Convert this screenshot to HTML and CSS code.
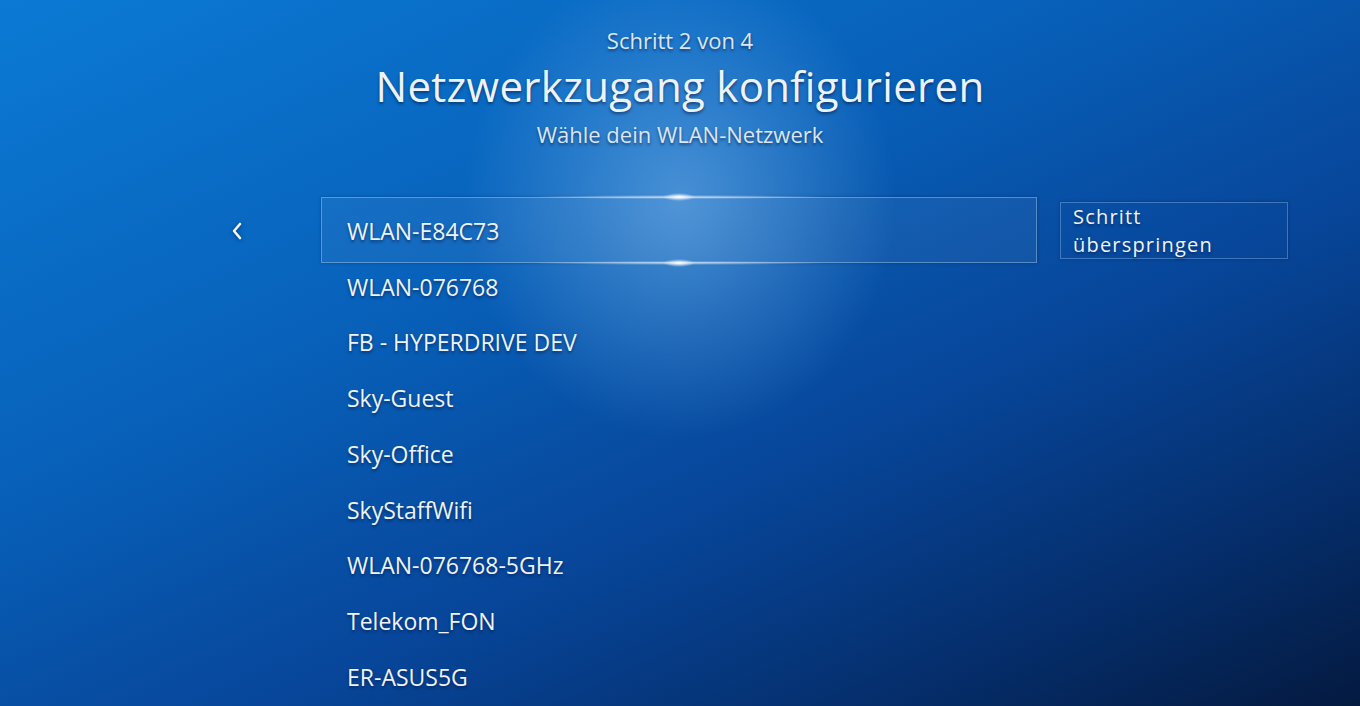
FILE: index.html
```html
<!DOCTYPE html>
<html lang="de">
<head>
<meta charset="utf-8">
<title>Netzwerkzugang konfigurieren</title>
<link rel="stylesheet" href="styles.css">
</head>
<body>
<div class="screen">
  <header class="header">
    <div class="step">Schritt 2 von 4</div>
    <h1 class="title">Netzwerkzugang konfigurieren</h1>
    <div class="subtitle">Wähle dein WLAN-Netzwerk</div>
  </header>
  <main class="main">
    <div class="back">
      <svg width="12" height="18" viewBox="0 0 12 18"><path d="M9 2 L3 9 L9 16" fill="none" stroke="#f2f6fc" stroke-width="2.6" stroke-linecap="round" stroke-linejoin="round"/></svg>
    </div>
    <ul class="list">
      <li class="item selected"><span>WLAN-E84C73</span></li>
      <li class="item"><span>WLAN-076768</span></li>
      <li class="item"><span>FB - HYPERDRIVE DEV</span></li>
      <li class="item"><span>Sky-Guest</span></li>
      <li class="item"><span>Sky-Office</span></li>
      <li class="item"><span>SkyStaffWifi</span></li>
      <li class="item"><span>WLAN-076768-5GHz</span></li>
      <li class="item"><span>Telekom_FON</span></li>
      <li class="item"><span>ER-ASUS5G</span></li>
    </ul>
    <div class="skip">Schritt<br>überspringen</div>
  </main>
</div>
</body>
</html>
```
FILE: styles.css
```css
html, body {
  margin: 0;
  padding: 0;
  width: 1360px;
  height: 706px;
  overflow: hidden;
}
body {
  font-family: "Open Sans", "Noto Sans", sans-serif;
  color: #eef3fb;
  background:
    radial-gradient(ellipse 300px 330px at 680px 200px, rgba(125,185,238,0.55), rgba(125,185,238,0) 72%),
    linear-gradient(155deg, #0b7ad4 0%, #0862bb 35%, #07469a 62%, #052f6e 82%, #041a40 100%);
}
.screen {
  width: 1360px;
  height: 706px;
  display: flex;
  flex-direction: column;
}
.header {
  display: flex;
  flex-direction: column;
  align-items: center;
  padding-top: 26px;
  text-shadow: 0 2px 3px rgba(0,20,60,0.55);
}
.step {
  font-size: 22px;
  line-height: 28px;
  color: #dbe5f3;
}
.title {
  margin: 0;
  font-size: 42px;
  font-weight: 400;
  line-height: 56px;
  margin-top: 4px;
  letter-spacing: 0.3px;
}
.subtitle {
  font-size: 22px;
  line-height: 28px;
  margin-top: 6px;
  color: #dbe5f3;
}
.main {
  display: flex;
  align-items: flex-start;
  margin-top: 55px;
}
.back {
  width: 321px;
  display: flex;
  justify-content: flex-end;
  padding-right: 78px;
  box-sizing: border-box;
  padding-top: 19px;
}
.back svg { display: block; filter: drop-shadow(0 1px 2px rgba(0,20,60,0.6)); }
.list {
  list-style: none;
  margin: 0;
  padding: 0;
  width: 716px;
}
.item {
  position: relative;
  height: 55.75px;
  display: flex;
  align-items: center;
  padding-left: 26px;
  font-size: 23px;
  text-shadow: 0 2px 3px rgba(0,20,60,0.55);
}
.item span { position: relative; }
.selected::before {
  content: "";
  position: absolute;
  left: 0;
  right: 0;
  top: -6px;
  bottom: -4px;
  border: 1px solid rgba(170,205,240,0.45);
  background: rgba(255,255,255,0.05);
  box-shadow: 0 0 3px rgba(0,20,60,0.35);
}
.selected::after {
  content: "";
  position: absolute;
  left: 0;
  right: 0;
  top: -10px;
  bottom: -8px;
  background:
    radial-gradient(ellipse 16px 4px at 358px 4px, rgba(255,255,255,1), rgba(255,255,255,0) 100%),
    radial-gradient(ellipse 150px 2px at 358px 4px, rgba(220,240,255,0.8), rgba(220,240,255,0) 100%),
    radial-gradient(ellipse 16px 4px at 358px calc(100% - 4px), rgba(255,255,255,1), rgba(255,255,255,0) 100%),
    radial-gradient(ellipse 150px 2px at 358px calc(100% - 4px), rgba(220,240,255,0.8), rgba(220,240,255,0) 100%);
  pointer-events: none;
}
.skip {
  margin-left: 23px;
  margin-top: -1px;
  width: 228px;
  box-sizing: border-box;
  border: 1px solid rgba(150,190,235,0.4);
  padding: 0 12px;
  font-size: 20px;
  letter-spacing: 1.2px;
  line-height: 27.5px;
  text-shadow: 0 2px 3px rgba(0,20,60,0.55);
  box-shadow: 0 0 3px rgba(0,20,60,0.35);
}
```
